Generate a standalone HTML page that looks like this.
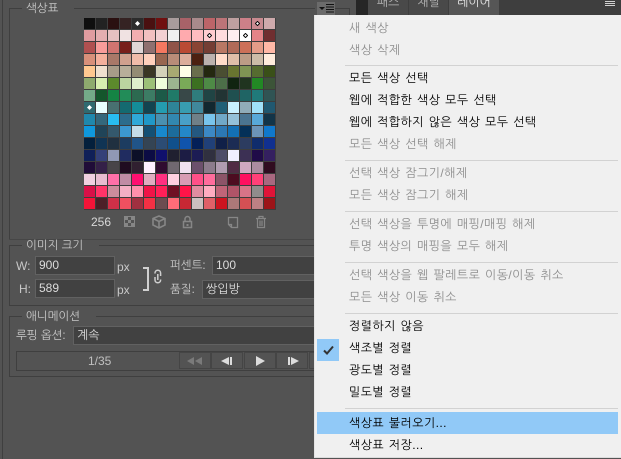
<!DOCTYPE html>
<html lang="ko"><head><meta charset="utf-8"><style>
html,body{margin:0;padding:0}
body{width:621px;height:459px;overflow:hidden;background:#535353;position:relative;font:12px/16px "Liberation Sans","NanumGothic","Noto Sans CJK KR",sans-serif;color:#c8c8c8}
.a{position:absolute;white-space:nowrap}
.k{font-size:11.5px;margin-top:1px}
.ln{position:absolute;background:#3f3f3f}
.in{position:absolute;background:#414141;border:1px solid #616161;box-sizing:border-box;color:#dcdcdc;padding-left:3px;line-height:17px;white-space:nowrap}
#g{position:absolute;left:84px;top:18px;width:192px;height:192px;background:#3d3d3d;display:grid;grid-template-columns:repeat(16,11px);grid-auto-rows:11px;gap:1px;padding:0}
#g i{display:block;position:relative}
.m{position:absolute;left:3px;top:3px;width:5px;height:5px}
#menu{position:absolute;left:314px;top:15px;width:307px;height:443px;background:#f0f0f0;border-left:1px solid #e4e4e4;border-bottom:1px solid #dcdcdc;box-sizing:border-box}
#menu div{position:absolute;left:34px;white-space:nowrap;line-height:16px;letter-spacing:.42px;word-spacing:1px;color:#000}
#menu .d{color:#8e8e8e}
#menu hr{position:absolute;left:30px;width:273px;height:1px;background:#d2d2d2;border:0;margin:0}
.btn{position:absolute;top:352px;height:17px;width:32px;background:#535353;border:1px solid #454545;box-sizing:border-box}
</style></head><body>
<div class="ln" style="left:2px;top:0;width:1px;height:459px"></div>
<div class="ln" style="left:9px;top:8px;width:1px;height:232px"></div>
<div class="ln" style="left:9px;top:8px;width:13px;height:1px"></div>
<div class="ln" style="left:74px;top:8px;width:241px;height:1px"></div>
<div class="ln" style="left:9px;top:239px;width:305px;height:1px;background:#464646"></div>
<div class="a k" style="left:26px;top:0">색상표</div>

<div id="g">
<i style="background:#0f0f0f"></i><i style="background:#222222"></i><i style="background:#2a1010"></i><i style="background:#352323"></i><i style="background:#2c2c2c"><svg class="m" viewBox="0 0 5 5"><path d="M2.5 0L5 2.5 2.5 5 0 2.5z" fill="#fff"/></svg></i><i style="background:#4a1010"></i><i style="background:#701010"></i><i style="background:#a89c9c"></i><i style="background:#a86268"></i><i style="background:#a88a8c"></i><i style="background:#bc6468"></i><i style="background:#bc7478"></i><i style="background:#bea0a0"></i><i style="background:#cc8088"></i><i style="background:#c88a90"><svg class="m" viewBox="0 0 5 5"><path d="M2.5 .4L4.6 2.5 2.5 4.6 .4 2.5z" fill="#fff" stroke="#000" stroke-width=".9"/></svg></i><i style="background:#ceaaac"></i>
<i style="background:#e09ca0"></i><i style="background:#e4aeb0"></i><i style="background:#e6c0c0"></i><i style="background:#f0e2e2"></i><i style="background:#f2aeb0"></i><i style="background:#f2c0c0"></i><i style="background:#f2d0d2"></i><i style="background:#f0f0f0"></i><i style="background:#ffaaae"></i><i style="background:#ffbcc0"></i><i style="background:#ffcdd0"><svg class="m" viewBox="0 0 5 5"><path d="M2.5 .4L4.6 2.5 2.5 4.6 .4 2.5z" fill="#fff" stroke="#000" stroke-width=".9"/></svg></i><i style="background:#ffdcde"></i><i style="background:#ffeef0"></i><i style="background:#ffffff"><svg class="m" viewBox="0 0 5 5"><path d="M2.5 .4L4.6 2.5 2.5 4.6 .4 2.5z" fill="#fff" stroke="#000" stroke-width=".9"/></svg></i><i style="background:#e48488"></i><i style="background:#702e30"></i>
<i style="background:#b05050"></i><i style="background:#f89c9a"></i><i style="background:#d07470"></i><i style="background:#781e1a"></i><i style="background:#e0d6d6"></i><i style="background:#907070"></i><i style="background:#f47860"></i><i style="background:#905448"></i><i style="background:#ba4a34"></i><i style="background:#8a4434"></i><i style="background:#743e34"></i><i style="background:#b87864"></i><i style="background:#b06a58"></i><i style="background:#cc7058"></i><i style="background:#e49c88"></i><i style="background:#ffb8a6"></i>
<i style="background:#d8907a"></i><i style="background:#f4b09c"></i><i style="background:#a87868"></i><i style="background:#d0a08e"></i><i style="background:#f0bcaa"></i><i style="background:#ffd0bc"></i><i style="background:#986650"></i><i style="background:#b88c78"></i><i style="background:#dcae9c"></i><i style="background:#4c2010"></i><i style="background:#bcb2ae"></i><i style="background:#ffdcca"></i><i style="background:#e0bea8"></i><i style="background:#bc9c86"></i><i style="background:#ccbca8"></i><i style="background:#ffecdc"></i>
<i style="background:#ffc890"></i><i style="background:#f0e0ce"></i><i style="background:#a89c88"></i><i style="background:#b8ae9a"></i><i style="background:#948c74"></i><i style="background:#3a3624"></i><i style="background:#d4d2ba"></i><i style="background:#a8aa72"></i><i style="background:#ffffe8"></i><i style="background:#6a6e4c"></i><i style="background:#242810"></i><i style="background:#4a4e32"></i><i style="background:#687430"></i><i style="background:#7f9454"></i><i style="background:#566c30"></i><i style="background:#3a5018"></i>
<i style="background:#8eaa6e"></i><i style="background:#d8eeb0"></i><i style="background:#5c8a2c"></i><i style="background:#bcd4a0"></i><i style="background:#e0f0cc"></i><i style="background:#9cc078"></i><i style="background:#f0ffdc"></i><i style="background:#9cb490"></i><i style="background:#7aaa58"></i><i style="background:#3c7020"></i><i style="background:#4e8a46"></i><i style="background:#4c6e48"></i><i style="background:#102410"></i><i style="background:#20341f"></i><i style="background:#228824"></i><i style="background:#3c5438"></i>
<i style="background:#74aa88"></i><i style="background:#14562c"></i><i style="background:#148444"></i><i style="background:#228c58"></i><i style="background:#2c6a50"></i><i style="background:#3c7c64"></i><i style="background:#1c5a48"></i><i style="background:#207a68"></i><i style="background:#384848"></i><i style="background:#2f7c7c"></i><i style="background:#204444"></i><i style="background:#223434"></i><i style="background:#1f5050"></i><i style="background:#1f6464"></i><i style="background:#207a7a"></i><i style="background:#305454"></i>
<i style="background:#2f6a70"><svg class="m" viewBox="0 0 5 5"><path d="M2.5 0L5 2.5 2.5 5 0 2.5z" fill="#fff"/></svg></i><i style="background:#e8ffff"></i><i style="background:#487070"></i><i style="background:#146a70"></i><i style="background:#148c98"></i><i style="background:#124450"></i><i style="background:#249cb0"></i><i style="background:#2e8498"></i><i style="background:#389cb0"></i><i style="background:#40889c"></i><i style="background:#122830"></i><i style="background:#206078"></i><i style="background:#c8f0ff"></i><i style="background:#90acb8"></i><i style="background:#a0e0f8"></i><i style="background:#205870"></i>
<i style="background:#2088ac"></i><i style="background:#34687c"></i><i style="background:#28bcf0"></i><i style="background:#2c6c8c"></i><i style="background:#30a8d8"></i><i style="background:#2098c8"></i><i style="background:#4a90b0"></i><i style="background:#3288b0"></i><i style="background:#48a0c8"></i><i style="background:#708088"></i><i style="background:#78c4ec"></i><i style="background:#70a8c8"></i><i style="background:#94c0d8"></i><i style="background:#4a7490"></i><i style="background:#58a8d8"></i><i style="background:#123448"></i>
<i style="background:#1098dc"></i><i style="background:#204458"></i><i style="background:#34586c"></i><i style="background:#3c98d0"></i><i style="background:#c4dce8"></i><i style="background:#145074"></i><i style="background:#1888cc"></i><i style="background:#1c6c9c"></i><i style="background:#2488c8"></i><i style="background:#245880"></i><i style="background:#3c88c4"></i><i style="background:#2c78b4"></i><i style="background:#1470b4"></i><i style="background:#043058"></i><i style="background:#6c94b8"></i><i style="background:#1078cc"></i>
<i style="background:#04203c"></i><i style="background:#103454"></i><i style="background:#203040"></i><i style="background:#1c3c60"></i><i style="background:#205488"></i><i style="background:#344454"></i><i style="background:#2c4c74"></i><i style="background:#10508c"></i><i style="background:#1054ac"></i><i style="background:#042058"></i><i style="background:#204078"></i><i style="background:#102048"></i><i style="background:#1c2c54"></i><i style="background:#2c3c60"></i><i style="background:#102c6c"></i><i style="background:#103090"></i>
<i style="background:#102058"></i><i style="background:#344078"></i><i style="background:#9098b4"></i><i style="background:#202c60"></i><i style="background:#0c1028"></i><i style="background:#0c0c44"></i><i style="background:#10106c"></i><i style="background:#202030"></i><i style="background:#1c1c44"></i><i style="background:#1c1c54"></i><i style="background:#303040"></i><i style="background:#4c4c68"></i><i style="background:#f0f0ff"></i><i style="background:#3c3054"></i><i style="background:#200c48"></i><i style="background:#342060"></i>
<i style="background:#200c38"></i><i style="background:#342048"></i><i style="background:#484448"></i><i style="background:#200c20"></i><i style="background:#302030"></i><i style="background:#fff0ff"></i><i style="background:#300c30"></i><i style="background:#706870"></i><i style="background:#f0e0f0"></i><i style="background:#6c506c"></i><i style="background:#8c7c8c"></i><i style="background:#b09cb0"></i><i style="background:#502c44"></i><i style="background:#d0a8c0"></i><i style="background:#ac8ca0"></i><i style="background:#300c20"></i>
<i style="background:#f0d0e0"></i><i style="background:#e8bcd0"></i><i style="background:#ff70a8"></i><i style="background:#c08ca4"></i><i style="background:#ff1070"></i><i style="background:#e0acc0"></i><i style="background:#ff3080"></i><i style="background:#ffd0e0"></i><i style="background:#d89cb4"></i><i style="background:#ff5088"></i><i style="background:#ff6c9c"></i><i style="background:#8c5468"></i><i style="background:#4c0c20"></i><i style="background:#ff1060"></i><i style="background:#ff4078"></i><i style="background:#a86880"></i>
<i style="background:#d81048"></i><i style="background:#ff3468"></i><i style="background:#cc8c9c"></i><i style="background:#f4b0c4"></i><i style="background:#ff90ac"></i><i style="background:#f01448"></i><i style="background:#ff2058"></i><i style="background:#701024"></i><i style="background:#ff1448"></i><i style="background:#e08ca0"></i><i style="background:#ffacc0"></i><i style="background:#c06478"></i><i style="background:#b05468"></i><i style="background:#d87488"></i><i style="background:#908c8c"></i><i style="background:#e01438"></i>
<i style="background:#f41438"></i><i style="background:#4c2028"></i><i style="background:#d03048"></i><i style="background:#f05060"></i><i style="background:#a03040"></i><i style="background:#f43044"></i><i style="background:#6c4c50"></i><i style="background:#ff6c78"></i><i style="background:#c82834"></i><i style="background:#ccc0c0"></i><i style="background:#e06068"></i><i style="background:#cc1420"></i><i style="background:#ac7878"></i><i style="background:#d45054"></i><i style="background:#bc8084"></i><i style="background:#9c1418"></i>
</div>

<div class="a" style="left:91px;top:214px;color:#d8d8d8">256</div>
<svg class="a" style="left:120px;top:214px" width="150" height="16" viewBox="0 0 150 16">
<g fill="#868686"><path d="M4.500 2.500h10v10h-10z" fill="none" stroke="#868686"/><path d="M5 3h3v3H5zM11 3h3v3h-3zM8 6h3v3H8zM5 9h3v3H5zM11 9h3v3h-3z"/></g>
<path d="M33 4.500l6-2.500 6 2.500v6.500l-6 3-6-3zM33 4.500l6 3 6-3M39 7.500v6" fill="none" stroke="#868686" stroke-width="1.600"/>
<path d="M63.500 7.500h8v6h-8zM65 7.500V5a2.500 2.500 0 0 1 5 0v2.500" fill="none" stroke="#868686" stroke-width="1.500"/><path d="M66.500 10h2v2h-2z" fill="#868686"/>
<path d="M108.500 3.500h9v10h-6l-3-3zM108.500 10.500h3v3" fill="none" stroke="#868686" stroke-width="1.300"/>
<path d="M136 4.500h10M139 4V2.500h4V4M137.500 5v8.500h7V5M140 6.500v5.500M142 6.500v5.500" fill="none" stroke="#868686" stroke-width="1.200"/>
</svg>

<div class="ln" style="left:9px;top:245px;width:1px;height:61px"></div>
<div class="ln" style="left:9px;top:245px;width:13px;height:1px"></div>
<div class="ln" style="left:99px;top:245px;width:216px;height:1px"></div>
<div class="ln" style="left:9px;top:305px;width:306px;height:1px"></div>
<div class="a k" style="left:26px;top:237px">이미지 크기</div>
<div class="a" style="left:16px;top:258px">W:</div>
<div class="in" style="left:35px;top:256px;width:80px;height:19px">900</div>
<div class="a" style="left:117px;top:259px">px</div>
<div class="a" style="left:19px;top:281px">H:</div>
<div class="in" style="left:35px;top:279px;width:80px;height:19px">589</div>
<div class="a" style="left:117px;top:282px">px</div>
<svg class="a" style="left:140px;top:264px" width="24" height="28" viewBox="0 0 24 28">
<path d="M3 4h5v22H3" fill="none" stroke="#d0d0d0" stroke-width="2"/>
<path d="M15 9.500v-.5a2.800 2.800 0 0 1 5.600 0v3M15 13v3a2.800 2.800 0 0 0 5.600 0v-.5M17.800 10v6" fill="none" stroke="#cfcfcf" stroke-width="1.500"/></svg>
<div class="a k" style="left:170px;top:257px">퍼센트:</div>
<div class="in" style="left:212px;top:256px;width:103px;height:19px">100</div>
<div class="a k" style="left:170px;top:281px">품질:</div>
<div class="in" style="left:202px;top:280px;width:113px;height:19px">쌍입방</div>

<div class="ln" style="left:9px;top:316px;width:1px;height:61px"></div>
<div class="ln" style="left:9px;top:316px;width:13px;height:1px"></div>
<div class="ln" style="left:96px;top:316px;width:219px;height:1px"></div>
<div class="ln" style="left:9px;top:376px;width:306px;height:1px"></div>
<div class="a k" style="left:26px;top:308px">애니메이션</div>
<div class="a k" style="left:16px;top:327px">루핑 옵션:</div>
<div class="in" style="left:73px;top:326px;width:242px;height:19px">계속</div>
<div class="a" style="left:16px;top:351px;width:299px;height:20px;border:1px solid #3f3f3f;box-sizing:border-box"></div>
<div class="a" style="left:88px;top:353px;color:#c0c0c0">1/35</div>
<div class="btn" style="left:179px"><svg width="30" height="15" style="display:block"><path d="M7 8l7-4v8zM15 8l7-4v8z" fill="#7a7a7a"/></svg></div>
<div class="btn" style="left:211px"><svg width="30" height="15" style="display:block"><path d="M9 8l8-4v8zM18 4h2v8h-2z" fill="#dcdcdc"/></svg></div>
<div class="btn" style="left:244px"><svg width="30" height="15" style="display:block"><path d="M11 3l9 5-9 5z" fill="#dcdcdc"/></svg></div>
<div class="btn" style="left:276px"><svg width="30" height="15" style="display:block"><path d="M11 4h2v8h-2zM14 4l8 4-8 4z" fill="#dcdcdc"/></svg></div>
<div class="btn" style="left:309px"></div>

<div class="a" style="left:317px;top:2px;width:18px;height:13px;background:#6b6b6b"></div>
<svg class="a" style="left:318px;top:3px" width="17" height="12" viewBox="0 0 17 12"><path d="M1 4h6L4 7z" fill="#111"/><path d="M8 1.500h8M8 4h8M8 6.500h8M8 9h8" stroke="#111" stroke-width="1"/></svg>
<div class="ln" style="left:335px;top:8px;width:14px;height:1px"></div>
<div class="ln" style="left:349px;top:8px;width:1px;height:8px"></div>
<div class="a" style="left:356px;top:0;width:265px;height:15px;background:#3e3e3e"></div>
<div class="a" style="left:356px;top:0;width:12px;height:15px;background:#262626"></div>
<div class="a" style="left:368px;top:0;width:40px;height:15px;background:#494949;color:#b8b8b8;text-align:center;line-height:4px">패스</div>
<div class="a" style="left:409px;top:0;width:39px;height:15px;background:#494949;color:#b8b8b8;text-align:center;line-height:4px">채널</div>
<div class="a" style="left:449px;top:0;width:50px;height:15px;background:#565656;color:#e6e6e6;text-align:center;line-height:4px">레이어</div>
<svg class="a" style="left:605px;top:0" width="11" height="6"><path d="M0 1.500h10M0 3.500h10M0 5.500h10" stroke="#d0d0d0"/></svg>

<div id="menu">
<div class="d" style="top:5px">새 색상</div>
<div class="d" style="top:27px">색상 삭제</div>
<hr style="top:50px">
<div style="top:55px">모든 색상 선택</div>
<div style="top:77px">웹에 적합한 색상 모두 선택</div>
<div style="top:99px">웹에 적합하지 않은 색상 모두 선택</div>
<div class="d" style="top:121px">모든 색상 선택 해제</div>
<hr style="top:145px">
<div class="d" style="top:150px">선택 색상 잠그기/해제</div>
<div class="d" style="top:172px">모든 색상 잠그기 해제</div>
<hr style="top:196px">
<div class="d" style="top:201px">선택 색상을 투명에 매핑/매핑 해제</div>
<div class="d" style="top:223px">투명 색상의 매핑을 모두 해제</div>
<hr style="top:247px">
<div class="d" style="top:252px">선택 색상을 웹 팔레트로 이동/이동 취소</div>
<div class="d" style="top:274px">모든 색상 이동 취소</div>
<hr style="top:298px">
<div style="top:303px">정렬하지 않음</div>
<span style="position:absolute;left:2px;top:324px;width:22px;height:22px;background:#91c9f7"></span>
<svg style="position:absolute;left:2px;top:324px" width="22" height="22"><path d="M7 11.500l3 3 6-7" fill="none" stroke="#333" stroke-width="2"/></svg>
<div style="top:325px">색조별 정렬</div>
<div style="top:347px">광도별 정렬</div>
<div style="top:369px">밀도별 정렬</div>
<hr style="top:393px">
<span style="position:absolute;left:2px;top:397px;width:301px;height:22px;background:#91c9f7"></span>
<div style="top:400px">색상표 불러오기...</div>
<div style="top:422px">색상표 저장...</div>
</div>
</body></html>
